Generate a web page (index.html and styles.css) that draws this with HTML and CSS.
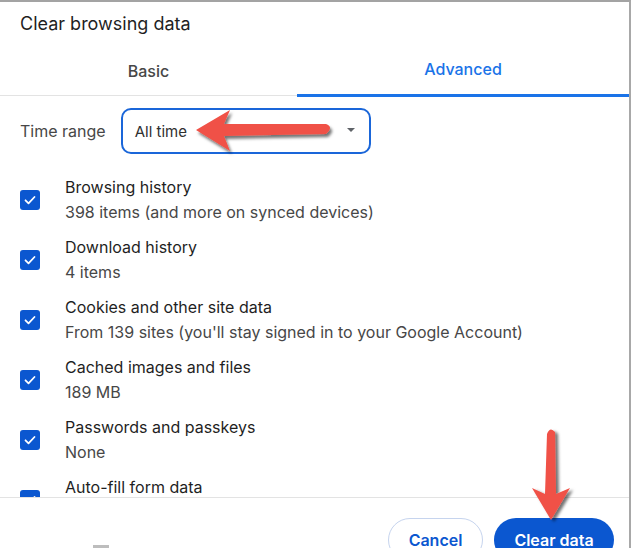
FILE: index.html
```html
<!DOCTYPE html>
<html>
<head>
<meta charset="utf-8">
<link rel="stylesheet" href="styles.css">
</head>
<body>
<div class="dialog">
  <div class="title">Clear browsing data</div>
  <div class="tabs">
    <div class="tab">Basic</div>
    <div class="tab active">Advanced</div>
  </div>
  <div class="body">
    <div class="range">
      <span class="range-label">Time range</span>
      <div class="select">
        <span>All time</span>
        <span class="caret"></span>
      </div>
    </div>
    <div class="item">
      <span class="check"><svg viewBox="0 0 20 20" width="20" height="20"><path d="M5.5 10.3l3 3 6-6.3" fill="none" stroke="#fff" stroke-width="1.8" stroke-linecap="round" stroke-linejoin="round"/></svg></span>
      <div class="texts"><div class="name">Browsing history</div><div class="sub">398 items (and more on synced devices)</div></div>
    </div>
    <div class="item">
      <span class="check"><svg viewBox="0 0 20 20" width="20" height="20"><path d="M5.5 10.3l3 3 6-6.3" fill="none" stroke="#fff" stroke-width="1.8" stroke-linecap="round" stroke-linejoin="round"/></svg></span>
      <div class="texts"><div class="name">Download history</div><div class="sub">4 items</div></div>
    </div>
    <div class="item">
      <span class="check"><svg viewBox="0 0 20 20" width="20" height="20"><path d="M5.5 10.3l3 3 6-6.3" fill="none" stroke="#fff" stroke-width="1.8" stroke-linecap="round" stroke-linejoin="round"/></svg></span>
      <div class="texts"><div class="name">Cookies and other site data</div><div class="sub">From 139 sites (you'll stay signed in to your Google Account)</div></div>
    </div>
    <div class="item">
      <span class="check"><svg viewBox="0 0 20 20" width="20" height="20"><path d="M5.5 10.3l3 3 6-6.3" fill="none" stroke="#fff" stroke-width="1.8" stroke-linecap="round" stroke-linejoin="round"/></svg></span>
      <div class="texts"><div class="name">Cached images and files</div><div class="sub">189 MB</div></div>
    </div>
    <div class="item">
      <span class="check"><svg viewBox="0 0 20 20" width="20" height="20"><path d="M5.5 10.3l3 3 6-6.3" fill="none" stroke="#fff" stroke-width="1.8" stroke-linecap="round" stroke-linejoin="round"/></svg></span>
      <div class="texts"><div class="name">Passwords and passkeys</div><div class="sub">None</div></div>
    </div>
    <div class="item">
      <span class="check"><svg viewBox="0 0 20 20" width="20" height="20"><path d="M5.5 10.3l3 3 6-6.3" fill="none" stroke="#fff" stroke-width="1.8" stroke-linecap="round" stroke-linejoin="round"/></svg></span>
      <div class="texts"><div class="name">Auto-fill form data</div><div class="sub">&nbsp;</div></div>
    </div>
  </div>
  <div class="footer">
    <span class="ghost"></span>
    <button class="btn cancel">Cancel</button>
    <button class="btn primary">Clear data</button>
  </div>

  <svg class="arrow arrow-left" width="160" height="50" viewBox="0 0 160 50">
    <defs>
      <filter id="sh" x="-20%" y="-40%" width="140%" height="180%">
        <feDropShadow dx="2" dy="3" stdDeviation="1.6" flood-color="#000" flood-opacity="0.55"/>
      </filter>
    </defs>
    <path d="M2 23 L36 3 L30 17 L132 17 Q140 20 132 27 L30 29 L36 44 Z" fill="#f05146" filter="url(#sh)"/>
  </svg>

  <svg class="arrow arrow-down" width="50" height="100" viewBox="0 0 50 100">
    <defs>
      <filter id="sh2" x="-40%" y="-20%" width="180%" height="140%">
        <feDropShadow dx="3" dy="2" stdDeviation="1.6" flood-color="#000" flood-opacity="0.55"/>
      </filter>
    </defs>
    <path d="M19 8 Q22 0 27 6 L28 68 L42 62 L23 94 L4 62 L17 68 Z" fill="#f05146" filter="url(#sh2)"/>
  </svg>
</div>
</body>
</html>
```

FILE: styles.css
```css
* { box-sizing: border-box; }
html, body { margin: 0; padding: 0; background: #fff; }
body {
  width: 631px;
  height: 548px;
  overflow: hidden;
  font-family: "Inter", "Liberation Sans", Arial, sans-serif;
  color: #1f1f1f;
}
.dialog {
  position: relative;
  width: 631px;
  height: 548px;
  border-top: 2px solid #a3a3a3;
  border-right: 2px solid #a8a8a8;
  display: flex;
  flex-direction: column;
  overflow: hidden;
}
.title {
  font-size: 18px;
  line-height: 22px;
  padding: 11px 0 0 20px;
  height: 42px;
  color: #1f1f1f;
}
.tabs {
  display: grid;
  grid-template-columns: 297px 1fr;
  height: 52px;
  border-bottom: 1px solid #e3e3e3;
}
.tab {
  display: flex;
  align-items: center;
  justify-content: center;
  font-size: 16px;
  font-weight: 500;
  color: #474747;
  padding-top: 2px;
}
.tab.active {
  color: #1a73e8;
  border-bottom: 3px solid #1a73e8;
  margin-bottom: -2px;
  padding-top: 0;
}
.body {
  flex: 1;
  overflow: hidden;
  padding: 12px 0 0 20px;
  border-bottom: 1px solid #e3e3e3;
}
.range {
  display: flex;
  align-items: center;
  gap: 15px;
  height: 46px;
  margin-bottom: 21px;
}
.range-label {
  font-size: 16px;
  color: #474747;
}
.select {
  width: 250px;
  height: 46px;
  border: 2px solid #1a66d9;
  border-radius: 10px;
  display: flex;
  align-items: center;
  justify-content: space-between;
  padding: 0 14px 0 12px;
  font-size: 15px;
  color: #303030;
}
.caret {
  width: 0;
  height: 0;
  border-left: 4px solid transparent;
  border-right: 4px solid transparent;
  border-top: 4px solid #5f6368;
  margin-top: -2px;
}
.item {
  display: flex;
  align-items: center;
  gap: 25px;
  height: 50px;
  margin-bottom: 10px;
}
.check {
  width: 20px;
  height: 20px;
  border-radius: 3px;
  background: #0b57d0;
  display: flex;
  flex-shrink: 0;
}
.texts { display: flex; flex-direction: column; }
.name {
  font-size: 16px;
  line-height: 25px;
  color: #1f1f1f;
}
.sub {
  font-size: 16px;
  line-height: 25px;
  color: #474747;
}
.footer {
  height: 50px;
  display: flex;
  align-items: flex-start;
  justify-content: flex-end;
  gap: 11px;
  padding: 20px 15px 0 0;
  position: relative;
}
.ghost {
  position: absolute;
  left: 93px;
  top: 47px;
  width: 16px;
  height: 3px;
  background: #bdbdbd;
}
.btn {
  font-family: inherit;
  font-size: 16px;
  font-weight: 600;
  height: 44px;
  border-radius: 22px;
  padding: 0 12px;
  cursor: pointer;
}
.cancel {
  background: #fff;
  color: #0b57d0;
  border: 1px solid #c6d4ee;
  width: 95px;
}
.primary {
  background: #0b57d0;
  color: #fff;
  border: none;
  width: 120px;
}
.arrow { position: absolute; }
.arrow-left { left: 194px; top: 105px; }
.arrow-down { left: 528px; top: 424px; }
```
